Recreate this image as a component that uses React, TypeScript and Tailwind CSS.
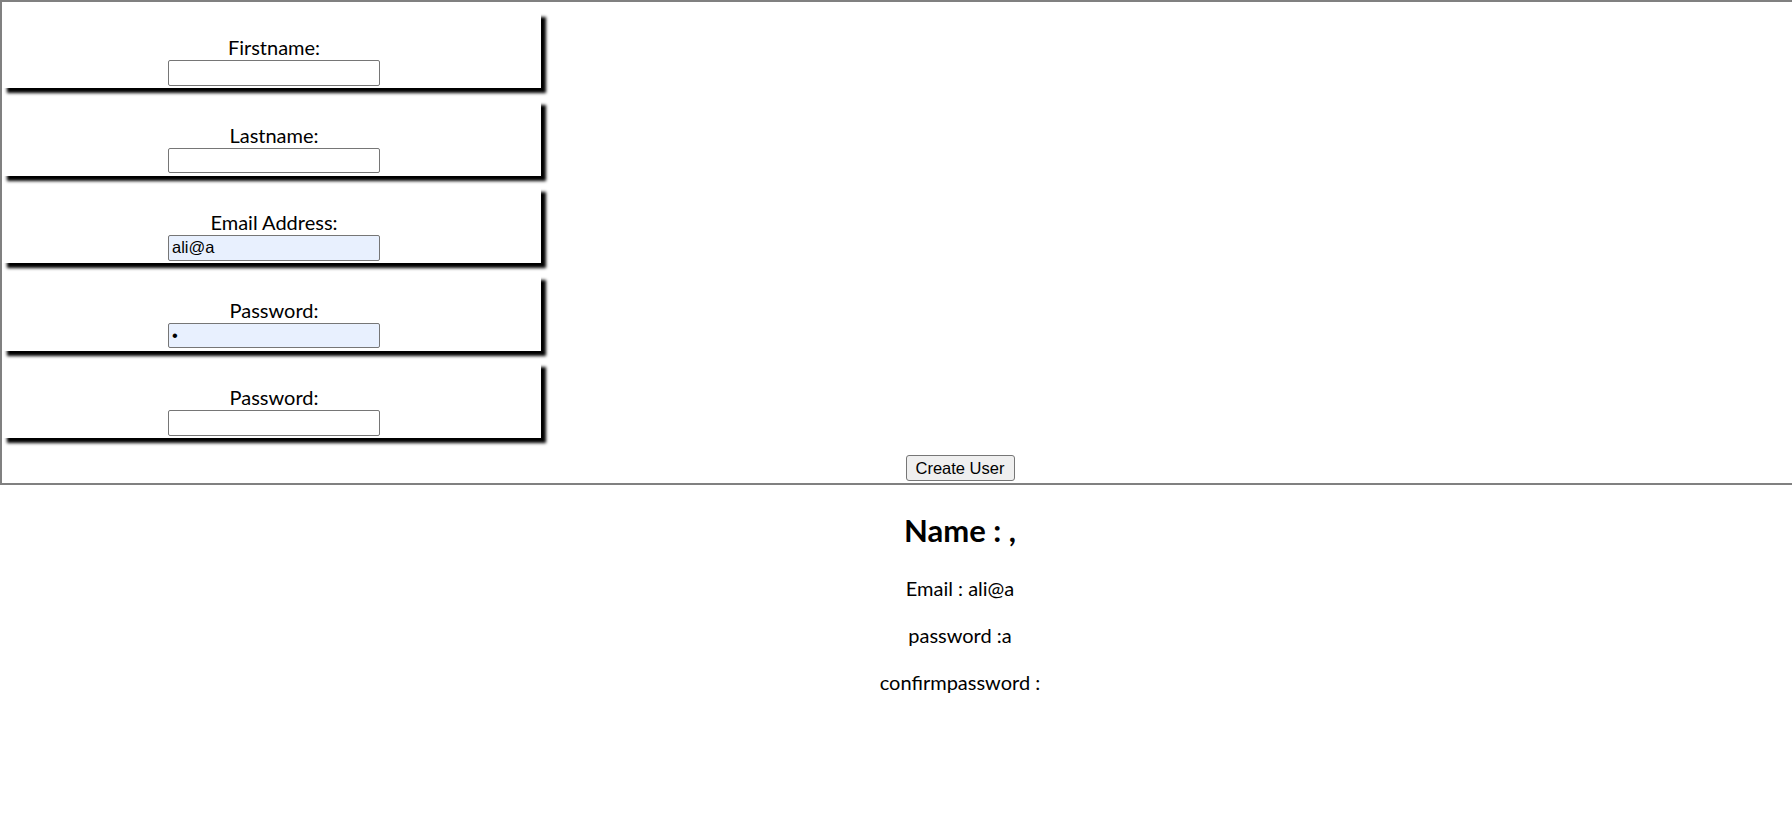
import React from 'react';

const fields = [
  { label: 'Firstname:', type: 'text', value: '', filled: false },
  { label: 'Lastname:', type: 'text', value: '', filled: false },
  { label: 'Email Address:', type: 'email', value: 'ali@a', filled: true },
  { label: 'Password:', type: 'password', value: 'a', filled: true },
  { label: 'Password:', type: 'password', value: '', filled: false },
];

export default function App() {
  return (
    <div className="w-full min-h-[837px] overflow-hidden bg-white text-black font-['Lato','Noto_Sans',sans-serif]">
      <div className="w-[1920px]">
        {/* Form */}
        <form
          className="border-2 border-[#808080] pt-[10px] pb-[2px]"
          onSubmit={(e) => e.preventDefault()}
        >
          <div className="flex flex-col gap-[11.5px]">
            {fields.map((f, i) => (
              <div
                key={i}
                className="w-[539px] h-[76px] bg-white shadow-[5px_5px_3px_black] flex flex-col items-center pt-[22px] pl-[5px]"
              >
                <label className="text-[20px] leading-[26px]">{f.label}</label>
                <input
                  type={f.type}
                  defaultValue={f.value}
                  className={`w-[212px] h-[25.5px] border border-[#767676] rounded-[2px] px-[3px] text-[16.5px] font-['Liberation_Sans',Arial,sans-serif] outline-none ${
                    f.filled ? 'bg-[#e8f0fe]' : 'bg-white'
                  }`}
                />
              </div>
            ))}
          </div>
          <div className="flex justify-center mt-[17px]">
            <button
              type="submit"
              className="w-[109px] h-[25.5px] bg-[#efefef] border border-[#767676] rounded-[3px] text-[16.5px] font-['Liberation_Sans',Arial,sans-serif] leading-none"
            >
              Create User
            </button>
          </div>
        </form>

        {/* Preview */}
        <div className="text-center">
          <h2 className="text-[31px] font-bold leading-[40px] mt-[25px] mb-[25px]">Name : ,</h2>
          <p className="text-[20px] leading-[27px] mb-[20px]">Email : ali@a</p>
          <p className="text-[20px] leading-[27px] mb-[20px]">password :a</p>
          <p className="text-[20px] leading-[27px]">confirmpassword :</p>
        </div>
      </div>
    </div>
  );
}
